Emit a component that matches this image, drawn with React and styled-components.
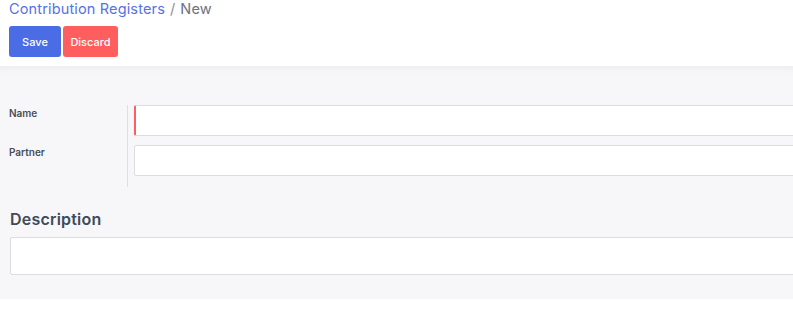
import React from 'react';
import styled, { createGlobalStyle } from 'styled-components';

const GlobalStyle = createGlobalStyle`
  body {
    margin: 0;
    background: #fff;
    font-family: Inter, "Open Sans", sans-serif;
  }
`;

const Page = styled.div`
  width: 100%;
  overflow: hidden;
`;

const Header = styled.div`
  background: #fff;
  padding: 0 9px;
  height: 66px;
  box-sizing: border-box;
`;

const Breadcrumb = styled.div`
  font-size: 14.5px;
  line-height: 18px;
  color: #6c7280;
  height: 26px;
  letter-spacing: 0.15px;
`;

const Crumb = styled.span`
  color: #5572e6;
`;

const Sep = styled.span`
  margin: 0 5px;
  color: #8a8f99;
`;

const Toolbar = styled.div`
  display: flex;
  gap: 2px;
`;

const Button = styled.button`
  height: 31px;
  padding: 0;
  border: none;
  border-radius: 3px;
  font-family: inherit;
  font-size: 11px;
  font-weight: 500;
  color: #fff;
  background: ${({ $variant }) => ($variant === 'danger' ? '#ff5e5e' : '#4a6de6')};
  width: ${({ $variant }) => ($variant === 'danger' ? '55px' : '52px')};
`;

const Sheet = styled.div`
  background: #f7f7f9;
  height: 233px;
  box-shadow: inset 0 8px 8px -6px rgba(0, 0, 0, 0.05);
  padding: 39px 0 0 9px;
  box-sizing: border-box;
  overflow: hidden;
`;

const FieldGroup = styled.div`
  display: flex;
  margin-right: -20px;
`;

const Labels = styled.div`
  width: 118px;
  flex-shrink: 0;
  border-right: 1px solid #dedfe3;
  padding-bottom: 4px;
`;

const Label = styled.div`
  height: 39px;
  font-size: 10px;
  font-weight: 600;
  color: #4a4d55;
  line-height: 16px;
`;

const Inputs = styled.div`
  flex: 1;
  padding-left: 6px;
  display: flex;
  flex-direction: column;
  gap: 9px;
`;

const Input = styled.div`
  height: 31px;
  box-sizing: border-box;
  background: #fff;
  border: 1px solid #dcdde1;
  border-left: ${({ $required }) => ($required ? '2px solid #ff5e5e' : '1px solid #dcdde1')};
  border-radius: 2px;
`;

const SectionTitle = styled.div`
  margin: 22px 0 0 1px;
  font-size: 16px;
  font-weight: 600;
  color: #404a58;
  line-height: 20px;
  letter-spacing: 0.2px;
`;

const TextArea = styled.div`
  margin: 8px -20px 0 1px;
  height: 38px;
  box-sizing: border-box;
  background: #fff;
  border: 1px solid #dcdde1;
  border-radius: 2px;
`;

export default function App() {
  return (
    <Page>
      <GlobalStyle />
      <Header>
        <Breadcrumb>
          <Crumb>Contribution Registers</Crumb>
          <Sep>/</Sep>New
        </Breadcrumb>
        <Toolbar>
          <Button>Save</Button>
          <Button $variant="danger">Discard</Button>
        </Toolbar>
      </Header>
      <Sheet>
        <FieldGroup>
          <Labels>
            <Label>Name</Label>
            <Label>Partner</Label>
          </Labels>
          <Inputs>
            <Input $required />
            <Input />
          </Inputs>
        </FieldGroup>
        <SectionTitle>Description</SectionTitle>
        <TextArea />
      </Sheet>
    </Page>
  );
}
